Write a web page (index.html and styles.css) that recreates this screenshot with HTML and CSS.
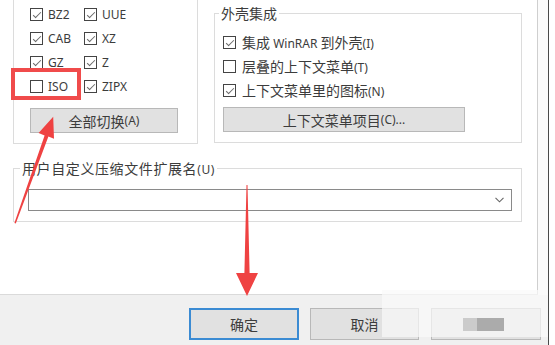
FILE: index.html
```html
<!DOCTYPE html>
<html lang="zh-CN">
<head>
<meta charset="utf-8">
<title>WinRAR 设置</title>
<link rel="stylesheet" href="styles.css">
</head>
<body>
<div class="dialog">
  <div class="top">
    <div class="page">
      <div class="row1">
        <div class="grp-left">
          <div class="grid">
            <div class="item"><span class="cb on"></span><span class="lat">BZ2</span></div>
            <div class="item"><span class="cb on"></span><span class="lat">UUE</span></div>
            <div class="item"><span class="cb on"></span><span class="lat">CAB</span></div>
            <div class="item"><span class="cb on"></span><span class="lat">XZ</span></div>
            <div class="item"><span class="cb on"></span><span class="lat">GZ</span></div>
            <div class="item"><span class="cb on"></span><span class="lat">Z</span></div>
            <div class="item"><span class="cb"></span><span class="lat">ISO</span></div>
            <div class="item"><span class="cb on"></span><span class="lat">ZIPX</span></div>
          </div>
          <div class="btn btn-all">全部切换<span class="lat">(A)</span></div>
        </div>
        <fieldset class="grp-shell">
          <legend>外壳集成</legend>
          <div class="item wide"><span class="cb on"></span><span>集成 <span class="lat">WinRAR</span> 到外壳<span class="lat">(I)</span></span></div>
          <div class="item wide"><span class="cb"></span><span>层叠的上下文菜单<span class="lat">(T)</span></span></div>
          <div class="item wide"><span class="cb on"></span><span>上下文菜单里的图标<span class="lat">(N)</span></span></div>
          <div class="btn btn-ctx">上下文菜单项目<span class="lat">(C)...</span></div>
        </fieldset>
      </div>
      <fieldset class="grp-ext">
        <legend>用户自定义压缩文件扩展名<span class="lat">(U)</span></legend>
        <div class="combo">
          <svg class="chev" width="9" height="6" viewBox="0 0 9 6"><path d="M0.5 0.8 L4.5 4.8 L8.5 0.8" fill="none" stroke="#666" stroke-width="1.1"/></svg>
        </div>
      </fieldset>
    </div>
    <div class="strip"></div>
  </div>
  <div class="footer">
    <div class="fbtn ok">确定</div>
    <div class="fbtn cancel">取消</div>
    <div class="fbtn third"><span class="mz1"></span><span class="mz2"></span></div>
  </div>
</div>
<div class="hl"></div>
<div class="mask"></div>
<svg class="arrows" width="555" height="345" viewBox="0 0 555 345">
  <polygon fill="#ef4242" points="14.4,223 44.6,135.4 38.6,133 53.2,116.8 54,138.8 48.4,136.6 15.8,223.4"/>
  <polygon fill="#ef4242" points="246.5,185 247.5,185 249.6,273 258,273 247,296 236,273 244.4,273"/>
</svg>
</body>
</html>
```
FILE: styles.css
```css
html, body {
  margin: 0;
  padding: 0;
}
body {
  width: 555px;
  height: 345px;
  overflow: hidden;
  background: #ffffff;
  font-family: "Noto Sans CJK SC", "Noto Sans", sans-serif;
  font-size: 14px;
  color: #3c3c3c;
  position: relative;
}
.lat {
  font-family: "Noto Sans", "Noto Sans CJK SC", sans-serif;
  font-size: 12px;
}
.dialog {
  width: 548px;
  height: 345px;
  border-right: 1px solid #4a4a4a;
  display: flex;
  flex-direction: column;
}
.top {
  display: flex;
  height: 295px;
}
.page {
  box-sizing: border-box;
  width: 538px;
  height: 295px;
  background: #fff;
  border-right: 1px solid #cfcfcf;
  border-bottom: 1px solid #dadada;
  padding-left: 13px;
}
.strip {
  flex: 1;
  background: #fbfbfb;
}
.row1 {
  display: flex;
  align-items: flex-start;
  gap: 16px;
}
.grp-left {
  box-sizing: border-box;
  width: 185px;
  border: 1px solid #dcdcdc;
  border-top: none;
  padding: 2px 0 10px 16px;
}
.grid {
  display: grid;
  grid-template-columns: 54px auto;
}
.item {
  display: flex;
  align-items: center;
  height: 24px;
  gap: 5px;
  white-space: nowrap;
}
.item.wide {
  gap: 6px;
}
.cb {
  position: relative;
  box-sizing: border-box;
  width: 13px;
  height: 13px;
  border: 1px solid #444;
  background: #fff;
  flex: none;
}
.cb.on::after {
  content: "";
  position: absolute;
  left: 2px;
  top: 3px;
  width: 7px;
  height: 3px;
  border-left: 1px solid #6a6a6a;
  border-bottom: 1px solid #6a6a6a;
  transform: rotate(-45deg);
}
.btn {
  box-sizing: border-box;
  height: 25px;
  background: #e1e1e1;
  border: 1px solid #b8b8b8;
  display: flex;
  align-items: center;
  justify-content: center;
  white-space: nowrap;
}
.btn-all {
  width: 148px;
  margin-top: 10px;
}
.btn-ctx {
  width: 242px;
  margin-top: 5px;
}
fieldset {
  margin: 0;
  min-width: 0;
  border: 1px solid #dcdcdc;
}
legend {
  padding: 0 2px;
  line-height: 17px;
  height: 17px;
  white-space: nowrap;
}
.grp-shell {
  box-sizing: border-box;
  width: 308px;
  margin-top: 5px;
  padding: 8px 10px 10px 8px;
}
.grp-shell legend {
  margin-left: -4px;
}
.grp-ext {
  box-sizing: border-box;
  width: 509px;
  margin-top: 16px;
  padding: 12px 9px 10px 14px;
}
.grp-ext legend {
  margin-left: -8px;
  letter-spacing: 0.6px;
}
.combo {
  box-sizing: border-box;
  height: 22px;
  border: 1px solid #8a8a8a;
  background: #fff;
  display: flex;
  align-items: center;
  justify-content: flex-end;
  padding-right: 7px;
}
.chev {
  display: block;
}
.footer {
  flex: 1;
  background: #f0f0f0;
  display: flex;
  justify-content: flex-end;
  align-items: flex-start;
  padding: 13px 7px 0 0;
}
.fbtn {
  box-sizing: border-box;
  height: 32px;
  background: #e1e1e1;
  border: 1px solid #b8b8b8;
  display: flex;
  align-items: center;
  justify-content: center;
}
.fbtn.ok {
  width: 110px;
  border: 2px solid #3b8bd3;
}
.fbtn.cancel {
  width: 109px;
  margin-left: 11px;
}
.fbtn.third {
  width: 110px;
  margin-left: 12px;
  padding-right: 6px;
}
.mz1,
.mz2 {
  position: relative;
  z-index: 2;
  height: 13px;
}
.mz1 {
  width: 14px;
  background: #cbcbcb;
}
.mz2 {
  width: 27px;
  background: #ababab;
}
.hl {
  position: absolute;
  left: 11px;
  top: 68px;
  width: 70px;
  height: 32px;
  box-sizing: border-box;
  border: 4px solid #f04b4b;
}
.mask {
  position: absolute;
  z-index: 1;
  left: 382px;
  top: 290px;
  width: 166px;
  height: 47px;
  background: rgba(250, 250, 250, 0.7);
}
.arrows {
  position: absolute;
  z-index: 3;
  left: 0;
  top: 0;
  pointer-events: none;
}
```
